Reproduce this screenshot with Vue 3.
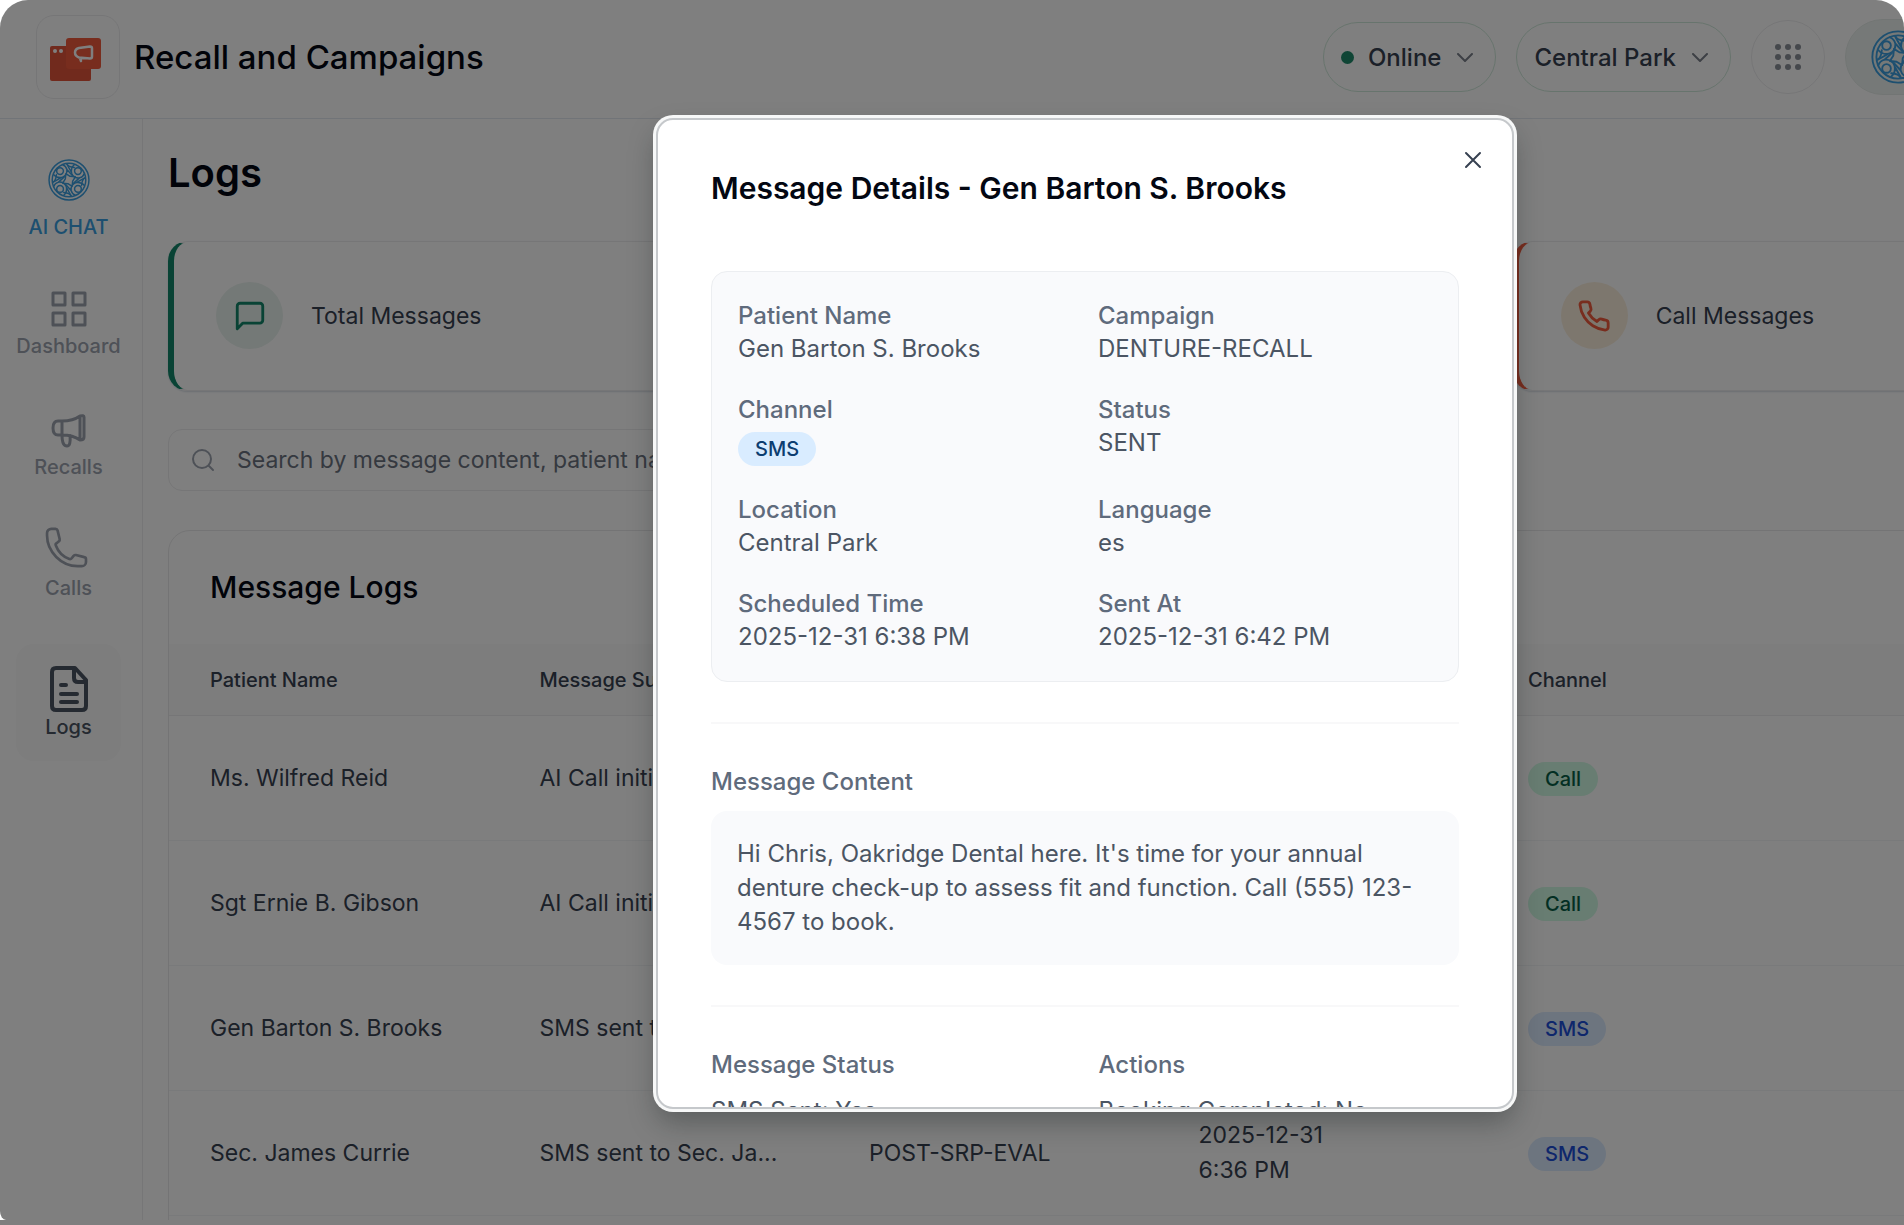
<template>
  <div class="frame">
    <div class="app">
      <header class="topbar">
        <span class="brand">
          <svg width="56" height="56" viewBox="0 0 56 56" fill="none">
            <rect x="0" y="17" width="41" height="35" rx="2" fill="#e2543a" />
            <circle cx="5" cy="22" r="2" fill="#fff" />
            <circle cx="11" cy="22" r="2" fill="#fff" />
            <rect x="16" y="9" width="35" height="31" rx="3" fill="#f05a3c" />
            <path
              d="M29 19L40 17.500Q42 17.500 42 19.500V27.500Q42 29.500 40 29.500L29 28.500Q25 27 25 23.500Q25 20 29 19ZM30 29L31 32"
              stroke="#fff"
              stroke-width="2.500"
              stroke-linecap="round"
              stroke-linejoin="round"
            />
          </svg>
        </span>
        <h1>Recall and Campaigns</h1>
        <button class="pill" type="button">
          <span class="dot"></span>
          Online
          <svg class="chevron" width="16" height="9" viewBox="0 0 16 9"><path d="M1 1l7 7 7-7" /></svg>
        </button>
        <button class="pill" type="button">
          Central Park
          <svg class="chevron" width="16" height="9" viewBox="0 0 16 9"><path d="M1 1l7 7 7-7" /></svg>
        </button>
        <button class="apps" type="button" aria-label="Apps">
          <svg width="28" height="28" viewBox="0 0 28 28">
            <circle v-for="n in 9" :key="n" :cx="4 + ((n - 1) % 3) * 10" :cy="4 + Math.floor((n - 1) / 3) * 10" r="3" />
          </svg>
        </button>
        <button class="assistant" type="button" aria-label="Assistant">
          <svg class="knot" width="54" height="54" viewBox="0 0 40 40">
            <path :d="knotRings" />
            <path v-for="angle in quarters" :key="angle" :d="knotLoop" :transform="`rotate(${angle} 20 20)`" />
          </svg>
        </button>
      </header>

      <div class="body">
        <nav class="sidebar">
          <a class="nav-item chat" href="#">
            <svg class="knot" width="42" height="42" viewBox="0 0 40 40">
              <path :d="knotRings" />
              <path v-for="angle in quarters" :key="angle" :d="knotLoop" :transform="`rotate(${angle} 20 20)`" />
            </svg>
            AI CHAT
          </a>
          <a class="nav-item dashboard" href="#">
            <svg width="36" height="36" viewBox="0 0 36 36" stroke-width="3">
              <path d="M2 2h12v12H2zM22 2h12v12H22zM2 22h12v12H2zM22 22h12v12H22z" />
            </svg>
            Dashboard
          </a>
          <a class="nav-item recalls" href="#">
            <svg width="36" height="36" viewBox="0 0 36 36" stroke-width="3">
              <path d="M11 9H7q-5 0-5 7t5 7h4zM11 9q11 0 18-5v24q-7-5-18-5zM29 4q4-1 4 1v20q0 3-4 3M11 23q0 11 5 11 4 0 3-10.500" />
            </svg>
            Recalls
          </a>
          <a class="nav-item calls" href="#">
            <svg width="50" height="42" viewBox="0 0 26 22" stroke-width="1.400">
              <path
                d="M1.500 4.500C1.500 13 9 20.500 17.500 20.500h2.200a2.200 2.200 0 0 0 2.200-2.200v-1.400c0-.5-.3-1-.9-1.100l-4.400-1.100c-.4-.1-.9.100-1.200.4l-1 1.300c-.3.400-.8.500-1.200.4a12 12 0 0 1-7.100-7.100c-.2-.5 0-1 .4-1.200l1.200-1c.4-.3.500-.8.400-1.200L7 1.800A1.100 1.100 0 0 0 5.900 1H3.800a2.200 2.200 0 0 0-2.300 2.200z"
              />
            </svg>
            Calls
          </a>
          <a class="nav-item logs" href="#">
            <svg width="42" height="50" viewBox="0 0 42 50" stroke-width="4">
              <path d="M27 4H8Q4 4 4 8v34q0 4 4 4h26q4 0 4-4V16zM26 4v10q0 4 4 4h8M13 21h5M13 30h16M13 38h16" />
            </svg>
            Logs
          </a>
        </nav>

        <main class="main">
          <h2>Logs</h2>
          <div class="cards">
            <article v-for="card in cards" :key="card.label" class="card" :class="card.tone">
              <span class="card-icon">
                <svg width="34" height="34" viewBox="0 0 24 24"><path :d="card.icon" /></svg>
              </span>
              {{ card.label }}
            </article>
          </div>

          <label class="search">
            <svg width="24" height="24" viewBox="0 0 24 24">
              <circle cx="11" cy="11" r="9" />
              <path d="M18 18l4 4" />
            </svg>
            <input type="text" aria-label="Search logs" placeholder="Search by message content, patient name..." />
          </label>

          <section class="panel">
            <h3>Message Logs</h3>
            <table>
              <thead>
                <tr>
                  <th v-for="column in columns" :key="column">{{ column }}</th>
                </tr>
              </thead>
              <tbody>
                <tr v-for="log in logs" :key="log.name">
                  <td>{{ log.name }}</td>
                  <td>{{ log.summary }}</td>
                  <td>{{ log.campaign }}</td>
                  <td>{{ log.date }}<br />{{ log.time }}</td>
                  <td>
                    <span class="badge" :class="log.channel.toLowerCase()">{{ log.channel }}</span>
                  </td>
                  <td></td>
                </tr>
              </tbody>
            </table>
          </section>
        </main>
      </div>

      <div class="overlay">
        <div class="modal" role="dialog" aria-labelledby="modal-title">
          <div class="modal-body">
            <button class="close" type="button" aria-label="Close">
              <svg width="18" height="18" viewBox="0 0 18 18"><path d="M2 2l14 14M16 2L2 16" /></svg>
            </button>
            <h2 id="modal-title">Message Details - Gen Barton S. Brooks</h2>
            <dl class="details">
              <div v-for="item in details" :key="item.label">
                <dt>{{ item.label }}</dt>
                <dd v-if="item.badge"><span class="badge info">{{ item.value }}</span></dd>
                <dd v-else>{{ item.value }}</dd>
              </div>
            </dl>
            <hr />
            <h4>Message Content</h4>
            <p class="message">
              Hi Chris, Oakridge Dental here. It's time for your annual denture check-up to assess fit and function.
              Call (555) 123-4567 to book.
            </p>
            <hr />
            <div class="outcome">
              <div>
                <h4>Message Status</h4>
                <p>SMS Sent: Yes</p>
              </div>
              <div>
                <h4>Actions</h4>
                <p>Booking Completed: No</p>
              </div>
            </div>
          </div>
        </div>
      </div>
    </div>
  </div>
</template>

<script setup>
const bubble = "M21 15a2 2 0 0 1-2 2H7l-4 4V5a2 2 0 0 1 2-2h14a2 2 0 0 1 2 2z";
const phone =
  "M22 16.920v3a2 2 0 0 1-2.180 2 19.790 19.790 0 0 1-8.630-3.070 19.500 19.500 0 0 1-6-6 19.790 19.790 0 0 1-3.070-8.670A2 2 0 0 1 4.110 2h3a2 2 0 0 1 2 1.720c.127.960.361 1.903.700 2.810a2 2 0 0 1-.450 2.110L8.090 9.910a16 16 0 0 0 6 6l1.270-1.270a2 2 0 0 1 2.110-.450c.907.339 1.850.573 2.810.700A2 2 0 0 1 22 16.920z";

// two outer rings and the star; the loop is repeated once per quarter turn
const knotRings =
  "M20 1a19 19 0 1 0 0 38a19 19 0 1 0 0-38zM20 4a16 16 0 1 0 0 32a16 16 0 1 0 0-32zM17 14l4 2.500 5 .500-2.500 4-.500 5-4-2.500-5-.500 2.500-4z";
const knotLoop =
  "M11.500 8.300a3.200 3.200 0 1 0 0 6.400a3.200 3.200 0 1 0 0-6.400zM5.500 15q3 3.500 8 2.500q5-2 4.500-7.500-1-3.500-4-4.500M18 10l5 5.500M5 22l8-4.500M18 4.500q1 3 7 3.500";
const quarters = [0, 90, 180, 270];

const cards = [
  { label: "Total Messages", tone: "green", icon: bubble },
  { label: "SMS Messages", tone: "blue", icon: bubble },
  { label: "Call Messages", tone: "orange", icon: phone },
];

const columns = ["Patient Name", "Message Summary", "Campaign", "Sent At", "Channel", ""];

const logs = [
  { name: "Ms. Wilfred Reid", summary: "AI Call initiated", campaign: "RECALL", date: "2025-12-31", time: "6:48 PM", channel: "Call" },
  { name: "Sgt Ernie B. Gibson", summary: "AI Call initiated", campaign: "RECALL", date: "2025-12-31", time: "6:45 PM", channel: "Call" },
  { name: "Gen Barton S. Brooks", summary: "SMS sent to Gen B...", campaign: "DENTURE-RECALL", date: "2025-12-31", time: "6:42 PM", channel: "SMS" },
  { name: "Sec. James Currie", summary: "SMS sent to Sec. Ja...", campaign: "POST-SRP-EVAL", date: "2025-12-31", time: "6:36 PM", channel: "SMS" },
];

const details = [
  { label: "Patient Name", value: "Gen Barton S. Brooks" },
  { label: "Campaign", value: "DENTURE-RECALL" },
  { label: "Channel", value: "SMS", badge: true },
  { label: "Status", value: "SENT" },
  { label: "Location", value: "Central Park" },
  { label: "Language", value: "es" },
  { label: "Scheduled Time", value: "2025-12-31 6:38 PM" },
  { label: "Sent At", value: "2025-12-31 6:42 PM" },
];
</script>

<style>
body {
  background: #fff;
}
</style>

<style scoped>
.frame {
  height: 100vh;
  overflow: hidden;
  border-radius: 28px 28px 0 0;
  background: linear-gradient(to top, #7f7e7e 5px, #fff 5px);
  font-family: Inter, "Liberation Sans", sans-serif;
  font-size: 23px;
  color: #374151;
}

/* content runs past the right edge of the window */
.app {
  position: relative;
  display: flex;
  flex-direction: column;
  width: calc(100% + 266px);
  height: calc(100% - 5px);
  border-bottom-left-radius: 6px 9px;
  background: #fff;
}

h1,
h2,
h3,
h4,
p,
dl,
dd {
  margin: 0;
}

button {
  font: inherit;
  color: inherit;
  padding: 0;
  background: none;
  border: none;
}

svg {
  flex-shrink: 0;
  fill: none;
  stroke-linecap: round;
  stroke-linejoin: round;
}

.topbar {
  box-sizing: border-box;
  flex-shrink: 0;
  display: flex;
  align-items: center;
  gap: 20px;
  height: 119px;
  padding: 0 24px 4px 36px;
  border-bottom: 1px solid #e2e8f0;
}

.brand {
  box-sizing: border-box;
  display: flex;
  align-items: center;
  justify-content: center;
  width: 84px;
  height: 84px;
  border: 1px solid #ececee;
  border-radius: 18px;
}

.topbar h1 {
  flex: 1;
  margin-left: -6px;
  font-size: 33px;
  font-weight: 500;
  color: #030712;
}

.pill {
  box-sizing: border-box;
  display: flex;
  align-items: center;
  height: 70px;
  padding: 0 22px 0 17px;
  border: 1px solid #cfe8da;
  border-radius: 35px;
  font-size: 24px;
  font-weight: 500;
}

.dot {
  width: 13px;
  height: 13px;
  margin-right: 14px;
  border-radius: 50%;
  background: #1f8a6b;
}

.chevron {
  margin-left: 16px;
  stroke: #7b818b;
  stroke-width: 2;
}

.apps {
  box-sizing: border-box;
  display: flex;
  align-items: center;
  justify-content: center;
  width: 74px;
  height: 74px;
  border: 1px solid #ececee;
  border-radius: 50%;
}

.apps svg {
  fill: #8b9099;
}

.assistant {
  box-sizing: border-box;
  display: flex;
  align-items: center;
  width: 301px;
  height: 76px;
  padding-left: 25px;
  border: 1px solid #e4ebe8;
  border-radius: 38px;
  background: #edf3f0;
}

.knot {
  stroke: #3b9fe0;
  stroke-width: 1.4;
}

.body {
  flex: 1;
  display: flex;
  min-height: 0;
  overflow: hidden;
}

.sidebar {
  box-sizing: border-box;
  display: flex;
  flex-direction: column;
  align-items: center;
  width: 143px;
  padding: 40px 5px 0 0;
  border-right: 1px solid #ececee;
}

.nav-item {
  box-sizing: border-box;
  display: flex;
  flex-direction: column;
  align-items: center;
  width: 105px;
  gap: 7px;
  font-size: 20px;
  font-weight: 500;
  line-height: 24px;
  color: #9ca3af;
  text-decoration: none;
}

.nav-item svg:not(.knot) {
  stroke: currentColor;
}

.chat {
  gap: 14px;
  color: #3b9fe0;
}

.dashboard {
  margin-top: 52px;
}

.recalls {
  margin-top: 54px;
}

.calls {
  margin-top: 48px;
}

.logs {
  gap: 1px;
  height: 117px;
  margin-top: 44px;
  padding-top: 20px;
  border-radius: 18px;
  background: #fafafa;
  color: #4b5563;
}

.main {
  flex: 1;
  min-width: 0;
  padding: 30px 23px 0 25px;
}

.main h2 {
  font-size: 40px;
  font-weight: 600;
  line-height: 48px;
  color: #030712;
}

.cards {
  display: grid;
  grid-template-columns: repeat(3, 1fr);
  gap: 38px;
  margin: 44px 0 38px;
}

.card {
  box-sizing: border-box;
  display: flex;
  align-items: center;
  gap: 28px;
  height: 150px;
  padding: 0 42px 1px;
  border: 1px solid #ececee;
  border-left: 6px solid #12876a;
  border-radius: 20px;
  box-shadow: 0 1px 2px #d5dbe3;
}

.card-icon {
  display: flex;
  align-items: center;
  justify-content: center;
  width: 67px;
  height: 67px;
  border-radius: 50%;
  background: #e9f2ee;
}

.card-icon svg {
  stroke: #12876a;
  stroke-width: 2;
}

.blue {
  border-left-color: #3b82f6;
}

.orange {
  border-left-color: #f05a3c;
}

.orange .card-icon {
  background: #fbefdd;
}

.orange .card-icon svg {
  stroke: #f05a3c;
}

.search {
  box-sizing: border-box;
  display: flex;
  align-items: center;
  gap: 22px;
  width: 60%;
  height: 62px;
  padding: 0 22px;
  border: 1px solid #ececee;
  border-radius: 14px;
}

.search svg {
  stroke: #9ca3af;
  stroke-width: 2;
}

.search input {
  flex: 1;
  padding: 0;
  border: none;
  background: none;
  font: inherit;
}

.search input::placeholder {
  color: #6b7280;
}

/* rows go on below the fold, so the panel never shows its bottom edge */
.panel {
  margin-top: 39px;
  padding-bottom: 40px;
  border: 1px solid #e9e9eb;
  border-radius: 22px;
}

.panel h3 {
  padding: 38px 41px;
  font-size: 30px;
  font-weight: 500;
  line-height: 37px;
  color: #030712;
}

table {
  width: 100%;
  border-collapse: separate;
  border-spacing: 0;
  table-layout: fixed;
}

th {
  height: 71px;
  padding: 0 41px;
  border-bottom: 1px solid #ececee;
  background: #fafafa;
  font-size: 20px;
  font-weight: 500;
  text-align: left;
}

td {
  padding: 27px 41px;
  border-bottom: 1px solid #f3f4f6;
  line-height: 35px;
  white-space: nowrap;
}

.badge {
  display: inline-block;
  padding: 0 17px;
  border-radius: 17px;
  font-size: 20px;
  font-weight: 500;
  line-height: 34px;
}

.call {
  background: #d1fae5;
  color: #065f46;
}

.sms {
  background: #dbeafe;
  color: #1d4ed8;
}

.info {
  background: #d9ecff;
  color: #0c3d70;
}

.overlay {
  position: absolute;
  inset: 0;
  display: flex;
  align-items: center;
  justify-content: center;
  padding-top: 6px;
  border-radius: inherit;
  background: rgba(0, 0, 0, 0.5);
}

.modal {
  box-sizing: border-box;
  display: flex;
  width: 864px;
  height: calc(100vh - 228px);
  padding: 3px;
  border-radius: 20px;
  background: #f7f8f8;
  box-shadow: 0 14px 28px -4px rgba(20, 30, 30, 0.35);
}

.modal-body {
  position: relative;
  flex: 1;
  overflow: hidden;
  padding: 48px 53px;
  border: 2px solid #c5c8cb;
  border-radius: 17px;
  background: #fff;
  font-size: 24px;
  color: #4b5563;
}

.close {
  position: absolute;
  top: 31px;
  right: 30px;
  display: flex;
}

.close svg {
  stroke: #374151;
  stroke-width: 2;
}

.modal-body h2 {
  font-size: 30px;
  font-weight: 600;
  line-height: 40px;
  color: #030712;
}

.details {
  display: grid;
  grid-template-columns: repeat(2, 1fr);
  gap: 27px 26px;
  margin-top: 63px;
  padding: 27px 26px;
  border: 1px solid #eceef1;
  border-radius: 16px;
  background: #f9fafc;
  line-height: 34px;
}

.details .badge {
  display: block;
  width: fit-content;
  margin-top: 6px;
}

dt,
h4 {
  font-size: 24px;
  font-weight: 500;
  color: #5f6b7c;
}

dt {
  line-height: 33px;
}

h4 {
  line-height: 34px;
}

hr {
  height: 2px;
  margin: 40px 0 41px;
  border: none;
  background: #f8f8f9;
}

.message {
  margin-top: 12px;
  padding: 26px;
  border-radius: 16px;
  background: #f9fafc;
  line-height: 34px;
}

.outcome {
  display: grid;
  grid-template-columns: repeat(2, 1fr);
  gap: 27px;
}

.outcome p {
  margin-top: 12px;
  line-height: 34px;
}
</style>
